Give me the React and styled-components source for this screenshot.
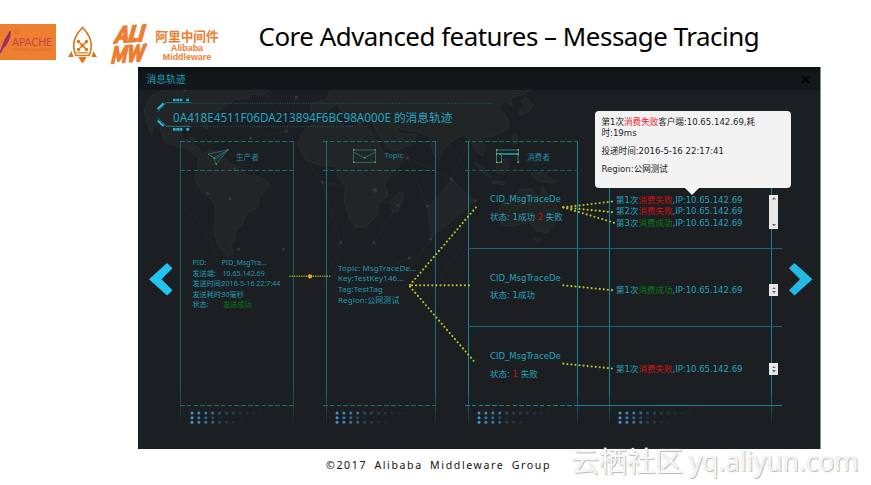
import React from "react";
import styled, { createGlobalStyle } from "styled-components";

const Global = createGlobalStyle`
  * { box-sizing: border-box; }
  html, body { margin: 0; padding: 0; background: #fff; overflow: hidden; }
`;

const ui = `"Noto Sans", "Noto Sans CJK SC", sans-serif`;
const wide = `"DejaVu Sans", "Noto Sans CJK SC", sans-serif`;

const Page = styled.div`
  position: relative;
  width: 871px;
  height: 485px;
  display: flex;
  flex-direction: column;
  overflow: hidden;
  background: #fff;
  font-family: ${ui};
`;

const Header = styled.header`
  height: 67px;
  flex: none;
  display: flex;
  align-items: flex-start;
`;

const ApacheBox = styled.svg`
  width: 56px;
  height: 36px;
  margin-top: 24px;
  background: #ee7e30;
`;

const Rocket = styled.svg`
  width: 30px;
  height: 38px;
  margin: 26px 0 0 12px;
`;

const AliMark = styled.svg`
  width: 41px;
  height: 42px;
  margin: 24px 0 0 11px;
  overflow: visible;
`;

const Brand = styled.div`
  width: 70px;
  margin: 28px 0 0 2px;
  display: flex;
  flex-direction: column;
  align-items: center;
  color: #ee7d31;
  font: bold 8.9px/8.5px "Liberation Sans", sans-serif;
  white-space: nowrap;
`;

const BrandName = styled.div`
  font: bold 12.7px/16px "Noto Sans CJK SC", sans-serif;
`;

const Title = styled.h1`
  margin: 18px 0 0 36.5px;
  font-size: 25.9px;
  line-height: 36px;
  letter-spacing: -0.48px;
  font-weight: 400;
  color: #000;
  white-space: nowrap;
`;

const Panel = styled.section`
  width: 683px;
  height: 382px;
  flex: none;
  margin-left: 138px;
  display: flex;
  flex-direction: column;
  background: #1b1f22;
  border-right: 1px solid #8b8f91;
  color: #27a3bf;
`;

const TitleBar = styled.div`
  height: 23px;
  flex: none;
  display: flex;
  align-items: center;
  justify-content: space-between;
  padding: 1px 10.5px 0 8.5px;
  background: linear-gradient(#0d1113, #12171a 30%, #12171a);
  font-size: 9.8px;
  color: #1f9db9;
`;

const CloseIcon = styled.svg`
  width: 9px;
  height: 9px;
`;

const Body = styled.div`
  position: relative;
  height: 359px;
`;

const Layer = styled.svg`
  position: absolute;
  left: 0;
  top: 0;
  width: 682px;
  height: 359px;
  pointer-events: none;
`;

const TraceHeading = styled.h2`
  position: relative;
  margin: 0;
  height: 51px;
  padding: 17px 0 0 35px;
  font-size: 11.7px;
  line-height: 20px;
  font-weight: 400;
  color: #27a5c2;
  white-space: nowrap;
`;

const Board = styled.div`
  position: relative;
  display: grid;
  grid-template-columns: 42px 114px 32px 110px 32px 110px 31px 163px 48px;
  height: 290px;
`;

const Nav = styled.button`
  grid-column: ${(p) => p.$col};
  align-self: start;
  margin: ${(p) => p.$margin};
  width: 24px;
  height: 33px;
  padding: 0;
  border: 0;
  background: none;
`;

const NavIcon = styled.svg`
  display: block;
  width: 24px;
  height: 33px;
`;

const Column = styled.div`
  grid-column: ${(p) => p.$col};
  display: flex;
  flex-direction: column;
  background:
    linear-gradient(${(p) => p.$line} 85%, transparent 99%) left / 1.4px 100% no-repeat,
    linear-gradient(${(p) => p.$line} 85%, transparent 99%) right / 1.4px 100% no-repeat;
`;

const Rule = styled.div`
  height: 1px;
  flex: none;
  margin: ${(p) => p.$out || "0 -2px 0 0"};
  background: ${(p) =>
    p.$solid ? p.$tone : `repeating-linear-gradient(90deg, ${p.$tone} 0 4.6px, transparent 4.6px 6.8px)`};
`;

const Head = styled.div`
  height: 28px;
  flex: none;
  display: flex;
  align-items: flex-start;
  padding-left: ${(p) => p.$left}px;
  font-size: 7.6px;
  line-height: 12px;
  color: #218aa0;
`;

const HeadIcon = styled.svg`
  width: 24px;
  height: 18px;
  margin-top: 6.5px;
  overflow: visible;
`;

const HeadLabel = styled.span`
  margin: ${(p) => p.$top}px 0 0 ${(p) => p.$gap}px;
  white-space: nowrap;
`;

const Content = styled.div`
  height: 234px;
  flex: none;
  padding: ${(p) => p.$pad || "0"};
`;

const ProducerRow = styled.div`
  display: grid;
  grid-template-columns: ${(p) => p.$label || 29}px auto;
  height: 10.6px;
  font-size: 7.1px;
  line-height: 10.6px;
  white-space: nowrap;
  color: #2499b3;
`;

const TopicLine = styled.div`
  font-size: 7.95px;
  letter-spacing: 0.14px;
  line-height: 10.7px;
  height: 10.7px;
  white-space: nowrap;
  color: #2499b3;
`;

const ConsumerCell = styled.div`
  height: 78.6px;
  padding: 22px 0 0 22px;
  font: 8.5px/12px ${wide};
  white-space: nowrap;
`;

const Status = styled.div`
  margin-top: 5.6px;
`;

const AttemptCell = styled.div`
  height: 78.4px;
  margin: 0 -10px 0 -141px;
  padding: 6px 4px 0 148px;
  display: flex;
  align-items: center;
  justify-content: space-between;
  border-bottom: ${(p) => (p.$last ? "0" : "1px solid #1a6675")};
  font: 8.5px/11.2px ${wide};
  white-space: nowrap;
`;

const Fail = styled.span`
  color: ${(p) => p.$tone || "#cf1218"};
`;

const Ok = styled.span`
  color: #087c10;
`;

const Scroll = styled.div`
  width: 8.6px;
  height: ${(p) => p.$h}px;
  display: flex;
  flex-direction: column;
  justify-content: space-between;
  align-items: center;
  padding: 2.5px 0;
  background: #e8e8e8;
`;

const Tick = styled.svg`
  width: 4px;
  height: 2.5px;
`;

const DotGrid = styled.svg`
  width: 80px;
  height: 16px;
  flex: none;
  margin: 4px 0 0 ${(p) => p.$left}px;
`;

const Tooltip = styled.div`
  position: absolute;
  left: 457px;
  top: 21px;
  width: 195.5px;
  height: 77px;
  padding: 6px 0 0 6.5px;
  border-radius: 4px;
  background: #f3f3f3;
  color: #1b1b1b;
  font: 8.55px/11px ${wide};
  white-space: nowrap;
  &::after {
    content: "";
    position: absolute;
    left: 90px;
    top: 76.5px;
    border: 7px solid transparent;
    border-top-color: #f3f3f3;
    border-bottom: 0;
  }
`;

const TipLine = styled.p`
  margin: 0 0 7px;
`;

const Footer = styled.footer`
  padding: 7px 0 0 326px;
  font-size: 10.6px;
  line-height: 18px;
  letter-spacing: 1.6px;
  word-spacing: 3px;
  color: #111;
  white-space: nowrap;
`;

const Watermark = styled.div`
  position: absolute;
  left: 571px;
  top: 443px;
  display: flex;
  align-items: center;
  gap: 6px;
  font: 26.4px/36px "Open Sans", "Noto Sans CJK SC", sans-serif;
  color: #f7f7f7;
  text-shadow: 1px 1px 1px #b9b9b9, 0 0 1px #d0d0d0;
  white-space: nowrap;
`;

const WatermarkName = styled.span`
  font-size: 28px;
`;

const links = [
  [816, 657, 1014, 424],
  [822, 658, 1001, 658],
  [816, 662, 1014, 893],
  [1276, 424, 1428, 406],
  [1276, 424, 1428, 439],
  [1276, 424, 1434, 472],
  [1276, 658, 1428, 673],
  [1276, 893, 1428, 908],
];

const nodes = [
  [140, 73], [475, 93], [445, 195], [338, 217], [553, 349], [608, 530], [708, 530], [711, 373],
  [780, 418], [808, 275], [940, 340], [868, 420], [878, 519], [1012, 404], [210, 382], [276, 398],
  [437, 549], [302, 549], [814, 576], [290, 308], [665, 172],
];

function WorldMap() {
  return (
    <Layer viewBox="0 72 2046 1077" preserveAspectRatio="none">
      <g fill="#212526" stroke="#2a2f30" strokeWidth="2.5" strokeLinejoin="round">
        <path d="M18 130 40 90 75 72H395L375 88 345 82 330 96 290 100 262 124 240 132 222 150 205 166 209 190 198 184 190 168 150 176 128 196 132 218 150 222 158 212 170 216 164 236 182 246 190 268 178 272 150 250 110 236 82 226 66 190 48 172 40 206 28 172Z" />
        <path d="M182 270 215 252 250 262 262 280 290 300 312 306 322 326 360 332 390 346 392 364 366 392 358 424 322 446 312 478 292 492 290 520 280 538 286 562 268 572 244 546 228 500 234 450 228 408 190 376 170 340 178 310Z" />
        <path d="M480 232 500 190 545 168 600 160 612 178 690 182 704 206 726 240 742 268 802 264 790 290 752 332 740 352 750 388 722 412 716 448 684 482 654 486 638 462 618 408 624 366 600 332 592 300 540 296 500 280Z" />
        <path d="M758 408 776 386 792 378 794 402 780 434 764 440Z" />
        <path d="M516 146 522 110 562 104 580 72H1180L1150 88 1118 96 1122 118 1100 104 1082 124 1106 152 1112 180 1084 204 1050 212 1024 218 1042 246 1032 270 1012 252 1000 226 976 208 952 218 914 252 906 280 888 266 874 212 838 196 800 192 770 180 788 204 836 206 820 232 772 256 748 246 716 196 700 162 660 166 640 148 610 134 600 112 566 132 546 152Z" />
        <path d="M1076 440 1094 412 1124 392 1148 372 1182 366 1190 386 1206 390 1214 362 1228 388 1252 410 1262 436 1250 478 1226 500 1196 494 1172 466 1128 480 1092 478Z" />
        <path d="M1010 288 1032 300 1060 334 1044 328 1020 304ZM1076 292 1104 276 1112 300 1098 326 1076 316ZM1062 344 1100 348 1098 356 1062 350ZM1178 322 1214 320 1256 346 1240 352 1196 342ZM1150 108 1166 96 1186 118 1172 136 1150 150 1142 138 1162 122ZM1122 206 1136 204 1140 232 1126 236ZM1186 518 1208 516 1198 528Z" />
      </g>
      <path d="M868 420 940 340 1012 404 878 519Z" fill="#222628" />
      <g fill="none" stroke="#272c2e" strokeWidth="1.6">
        <path d="M382 80 445 195 553 349 608 530 590 640M475 93 445 195 338 217 200 235M553 349 711 373 780 418 708 530 814 620M553 349 780 418M808 275 868 420 878 519 820 600M808 275 940 340 990 230M940 340 1012 404 878 519M130 420 180 460 240 570 300 549M170 370 276 398 240 470M608 530 548 672M608 530 700 620 814 576M968 549 900 640M665 172 808 275 711 373" />
      </g>
      <g fill="#353b3d">
        {nodes.map(([x, y], i) => (
          <circle key={i} cx={x} cy={y} r={i === 7 ? 7 : 4.5} />
        ))}
      </g>
    </Layer>
  );
}

function HeadingFrame() {
  return (
    <Layer viewBox="0 72 2046 1077" preserveAspectRatio="none">
      <g fill="none" stroke="#1a7b90" strokeWidth="3">
        <path d="M58 137 85 110H160M58 155 85 181H160" />
        <path d="M160 112H1065M160 182H645" stroke="#1b5a68" strokeDasharray="3 4" />
        <path d="M59 129 77 112M59 164 77 180" stroke="#23bbe0" strokeWidth="6" />
      </g>
      <path
        d="M105 98h8v8h-8zM115 98h8v8h-8zM125 98h8v8h-8zM145 98h8v8h-8zM105 186h8v8h-8zM115 186h8v8h-8zM125 186h8v8h-8zM145 186h8v8h-8z"
        fill="#22b4d8"
      />
    </Layer>
  );
}

function Connectors() {
  return (
    <Layer viewBox="0 72 2046 1077" preserveAspectRatio="none">
      <g stroke="#bcc230" strokeWidth="6.4" strokeLinecap="round" strokeDasharray="0 12.2">
        {links.map(([a, b, c, d], i) => (
          <line key={i} x1={a} y1={b} x2={c} y2={d} />
        ))}
      </g>
      <line x1="454" y1="631" x2="578" y2="631" stroke="#a3a51c" strokeWidth="4.5" strokeDasharray="4 3" />
      <circle cx="516" cy="631" r="6.5" fill="#f0a81c" />
    </Layer>
  );
}

function Dots({ left }) {
  const rows = [11, 5, 8];
  return (
    <DotGrid $left={left} viewBox="0 0 80 16">
      {rows.map((n, r) =>
        Array.from({ length: n }, (_, c) => (
          <circle
            key={`${r}-${c}`}
            cx={2 + c * 6.9}
            cy={3 + r * 4.65}
            r="1.5"
            fill="#4396d4"
            opacity={Math.max(0.08, 1 - (c / n) * 1.05) * (c > 3 ? 0.65 : 1)}
          />
        ))
      )}
    </DotGrid>
  );
}

function ScrollBar({ h }) {
  return (
    <Scroll $h={h}>
      <Tick viewBox="0 0 4 2.5"><path d="M0 2.500 2 0 4 2.500Z" fill="#666" /></Tick>
      <Tick viewBox="0 0 4 2.5"><path d="M0 0 2 2.500 4 0Z" fill="#666" /></Tick>
    </Scroll>
  );
}

function Attempt({ n, ok }) {
  return (
    <div>
      第{n}次{ok ? <Ok>消费成功</Ok> : <Fail>消费失败</Fail>},IP:10.65.142.69
    </div>
  );
}

const faint = "#1c5966";
const mid = "#1a6d7e";
const strong = "#158499";

export default function App() {
  return (
    <Page>
      <Global />
      <Header>
        <ApacheBox viewBox="0 0 56 36">
          <path d="M0 29C2 22 4 14 10.500 7 11.500 13 8 20 3 25L0 30Z" fill="#b8294f" />
          <path d="M0 29C3 22 6 15 10.500 7" stroke="#6c3c78" strokeWidth="1.300" fill="none" />
          <text x="13" y="10" fontSize="2.800" fill="#c56b3b" fontFamily="Lato">THE</text>
          <text x="12" y="22" fontSize="10.800" textLength="40" lengthAdjust="spacingAndGlyphs" fill="#c6424c" fontFamily="Lato">APACHE</text>
          <text x="12" y="26.500" fontSize="3" textLength="40" fill="#c86c38" fontFamily="Lato">SOFTWARE FOUNDATION</text>
        </ApacheBox>
        <Rocket viewBox="0 0 30 38" fill="none" stroke="#d97917" strokeWidth="1.700">
          <path d="M14.500 1.500C8 8 5.500 15 5.700 20.500 5.800 24 6.700 27 8 29.500H21C22.300 27 23.200 24 23.300 20.500 23.500 15 21 8 14.500 1.500Z" />
          <path d="M8.500 26.800H20.500" strokeWidth="1.200" />
          <path d="M10.500 15.500 18.500 23.500M18.500 15.500 10.500 23.500" strokeWidth="1.400" />
          <g fill="#d97917" stroke="none">
            <circle cx="10.500" cy="15.500" r="1.700" />
            <circle cx="18.500" cy="15.500" r="1.700" />
            <circle cx="10.500" cy="23.500" r="1.700" />
            <circle cx="18.500" cy="23.500" r="1.700" />
            <circle cx="14.500" cy="19.500" r="2" />
            <path d="M0 31 3.500 25 5.500 31ZM29 31 25.500 25 23.500 31ZM10.500 31H18.500L17 34 14.500 37.500 12 34Z" />
          </g>
        </Rocket>
        <AliMark viewBox="0 0 41 42" fill="#ee7d31" stroke="#ee7d31" strokeWidth="1.600" strokeLinejoin="round" fontFamily="Lato, sans-serif" fontWeight="800" fontStyle="italic">
          <text transform="translate(5.500 19) rotate(-4) skewX(-14)" fontSize="22" textLength="29" lengthAdjust="spacingAndGlyphs">ALI</text>
          <text transform="translate(2 39.500) rotate(-5) skewX(-12)" fontSize="22.500" textLength="33" lengthAdjust="spacingAndGlyphs">MW</text>
        </AliMark>
        <Brand>
          <BrandName>阿里中间件</BrandName>
          <span>Alibaba</span>
          <span>Middleware</span>
        </Brand>
        <Title>Core Advanced features – Message Tracing</Title>
      </Header>

      <Panel>
        <TitleBar>
          <span>消息轨迹</span>
          <CloseIcon viewBox="0 0 9 9">
            <path d="M1 1 8 8M8 1 1 8" stroke="#000" strokeWidth="1.8" />
          </CloseIcon>
        </TitleBar>
        <Body>
          <WorldMap />
          <HeadingFrame />
          <TraceHeading>0A418E4511F06DA213894F6BC98A000E 的消息轨迹</TraceHeading>
          <Board>
            <Nav $col={1} $margin="122px 0 0 10.500px" aria-label="Previous">
              <NavIcon viewBox="0 0 24 33">
                <path d="M18 0 23.500 5.200 12.500 16.200 23.500 27.200 18 32.500 0 16.200Z" fill="#22c3ef" />
              </NavIcon>
            </Nav>

            <Column $col={2} $line={faint}>
              <Rule $tone={mid} />
              <Head $left={28}>
                <HeadIcon viewBox="0 0 24 18">
                  <path d="M0 5 20 1 8 15 6 9ZM6 9 20 1M0 5 8 10 20 1" fill="none" stroke="#2c7479" strokeWidth=".8" />
                  <path d="M19 0h1.500v1.500h-1.500zM7.500 14.500h1.500v1.500h-1.500zM5.500 8.500h1.200v1.200h-1.200z" fill="#6f963a" />
                </HeadIcon>
                <HeadLabel $top={9} $gap={4}>生产者</HeadLabel>
              </Head>
              <Rule $tone={mid} />
              <Content $pad="86px 0 0 12.500px">
                <ProducerRow><span>PID:</span><span>PID_MsgTra...</span></ProducerRow>
                <ProducerRow $label={30}><span>发送端:</span><span>10.65.142.69</span></ProducerRow>
                <ProducerRow><span>发送时间:</span><span>2016-5-16 22:7:44</span></ProducerRow>
                <ProducerRow><span>发送耗时:</span><span>30毫秒</span></ProducerRow>
                <ProducerRow $label={30.5}><span>状态:</span><Ok>发送成功</Ok></ProducerRow>
              </Content>
              <Rule $tone={mid} />
              <Dots left={10} />
            </Column>

            <Column $col={4} $line={mid}>
              <Rule $tone={mid} $out="0 -3px" />
              <Head $left={27}>
                <HeadIcon viewBox="0 0 24 18">
                  <path d="M.5 1H22.500V13.500H.5ZM.5 3 11.500 9 22.500 3" fill="none" stroke="#2a6d70" strokeWidth=".9" />
                  <path d="M0 0h1.500v1.500H0zM21.500 0H23v1.500h-1.500zM0 12.500h1.500V14H0zM21.500 12.500H23V14h-1.500zM10.800 8h1.500v1.500h-1.500z" fill="#74993a" />
                </HeadIcon>
                <HeadLabel $top={7} $gap={7.5}>Topic</HeadLabel>
              </Head>
              <Rule $tone={mid} $out="0 -3px" />
              <Content $pad="91.500px 0 0 12px">
                <TopicLine>Topic: MsgTraceDe...</TopicLine>
                <TopicLine>Key:TestKey146...</TopicLine>
                <TopicLine>Tag:TestTag</TopicLine>
                <TopicLine>Region:公网测试</TopicLine>
              </Content>
              <Rule $tone={mid} $out="0 -3px" />
              <Dots left={8.5} />
            </Column>

            <Column $col={6} $line={strong}>
              <Rule $tone={mid} $out="0 -3px" />
              <Head $left={28}>
                <HeadIcon viewBox="0 0 24 18">
                  <path d="M.5 1H22.500V4.500H.5ZM.5 4.500V13.500H5.500V5.500H22V13.500" fill="none" stroke="#24838f" strokeWidth="1" />
                  <path d="M0 0h1.500v1.500H0zM21.500 0H23v1.500h-1.500zM0 4.500h1.500V6H0zM0 12.500h1.500V14H0zM3.500 4.500H5V6H3.500zM4.500 12.500H6V14H4.500zM21.500 12.500H23V14h-1.500zM21.500 4.500H23V6h-1.500z" fill="#94b32c" />
                </HeadIcon>
                <HeadLabel $top={8.5} $gap={7}>消费者</HeadLabel>
              </Head>
              <Rule $tone={faint} $out="0 -3px" />
              <Content>
                <ConsumerCell>
                  CID_MsgTraceDe
                  <Status>状态: 1成功 <Fail>2</Fail> 失败</Status>
                </ConsumerCell>
                <ConsumerCell>
                  CID_MsgTraceDe
                  <Status>状态: 1成功</Status>
                </ConsumerCell>
                <ConsumerCell>
                  CID_MsgTraceDe
                  <Status>状态: <Fail>1</Fail> 失败</Status>
                </ConsumerCell>
              </Content>
              <Rule $tone={strong} $out="0 -3px" />
              <Dots left={8.5} />
            </Column>

            <Column $col={8} $line={strong}>
              <Content $pad="29.300px 0 0">
                <AttemptCell>
                  <div>
                    <Attempt n={1} />
                    <Attempt n={2} />
                    <Attempt n={3} ok />
                  </div>
                  <ScrollBar h={34} />
                </AttemptCell>
                <AttemptCell>
                  <Attempt n={1} ok />
                  <ScrollBar h={12} />
                </AttemptCell>
                <AttemptCell $last>
                  <Attempt n={1} />
                  <ScrollBar h={12} />
                </AttemptCell>
                <Rule $tone={strong} $solid $out="0 -10px 0 -32px" />
                <Dots left={9} />
              </Content>
            </Column>

            <Nav $col={9} $margin="122px 0 0 16.500px" aria-label="Next">
              <NavIcon viewBox="0 0 24 33">
                <path d="M5.500 0 23.500 16.200 5.500 32.500 0 27.200 11 16.200 0 5.200Z" fill="#22b9e2" />
              </NavIcon>
            </Nav>
          </Board>
          <Connectors />
          <Tooltip>
            <TipLine>
              第1次<Fail $tone="#f0202a">消费失败</Fail>客户端:10.65.142.69,耗<br />时:19ms
            </TipLine>
            <TipLine>投递时间:2016-5-16 22:17:41</TipLine>
            <TipLine>Region:公网测试</TipLine>
          </Tooltip>
        </Body>
      </Panel>

      <Footer>©2017 Alibaba Middleware Group</Footer>
      <Watermark>
        <WatermarkName>云栖社区</WatermarkName>
        <span>yq.aliyun.com</span>
      </Watermark>
    </Page>
  );
}
